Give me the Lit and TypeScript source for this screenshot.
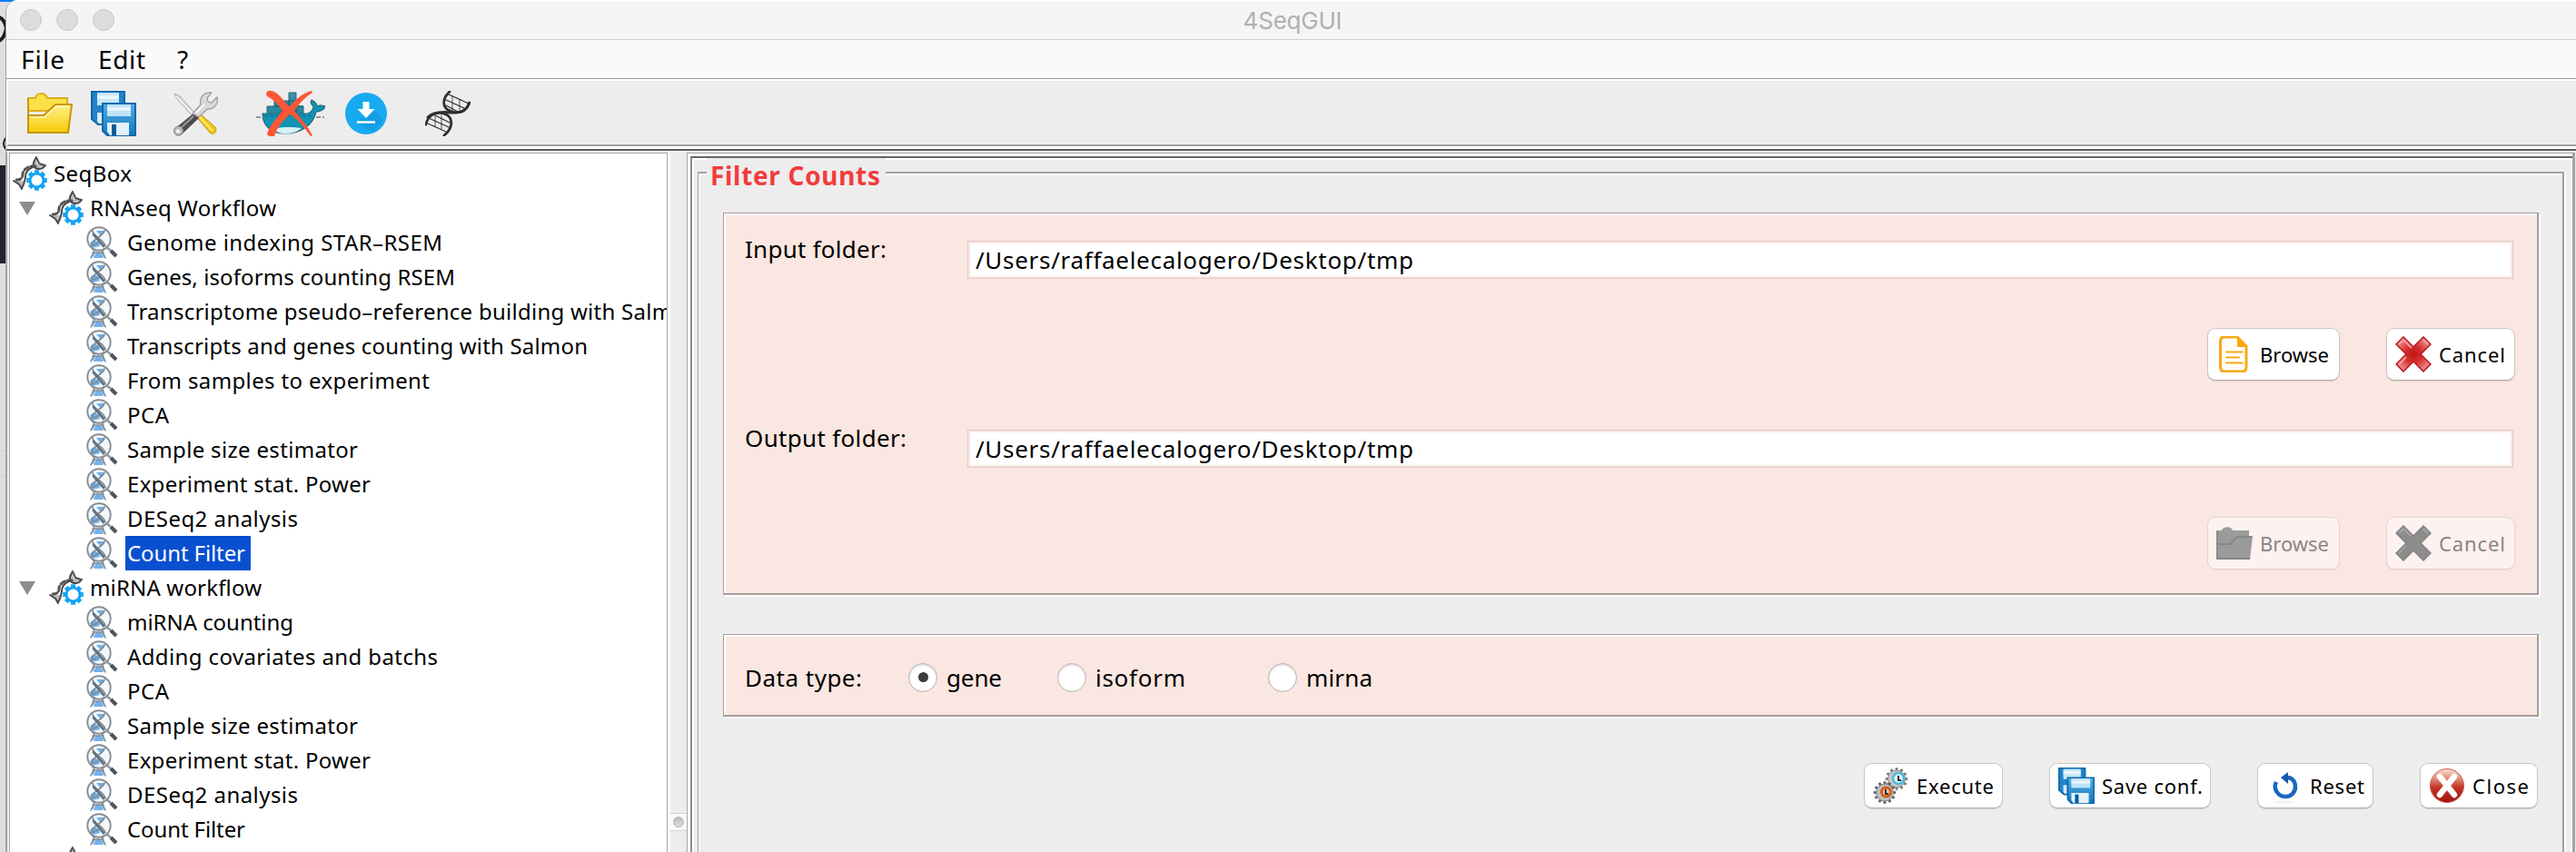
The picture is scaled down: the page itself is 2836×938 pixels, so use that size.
import { LitElement, html, css, svg, nothing } from "lit";
import { customElement, property } from "lit/decorators.js";

/** A single line of text whose tracking is adjusted to fill a given width. */
@customElement("fit-text")
class FitText extends LitElement {
  @property() text = "";
  @property({ type: Number }) w = 0;
  static styles = css`
    :host { display: inline-block; white-space: pre; }
    .t { display: inline-block; }
  `;
  updated() {
    const el = this.renderRoot.querySelector(".t") as HTMLElement;
    el.style.letterSpacing = "0px";
    const n = this.text.length;
    if (this.w && n > 1) {
      const natural = el.getBoundingClientRect().width;
      el.style.letterSpacing = ((this.w - natural) / (n - 1)).toFixed(3) + "px";
    }
  }
  render() {
    return html`<span class="t">${this.text}</span>`;
  }
}

const floppy = svg`
  <g>
    <path d="M1 1h36v36H8l-7-6z" fill="#2384c8" stroke="#0a69ad" stroke-width="2"/>
    <path d="M7 2h24v14H7z" fill="#c5e6f9"/><path d="M7 5h24v4H7z" fill="#e8f6fe"/>
    <path d="M7 24h5v12H9l-2-2z" fill="#d6ecf9"/>
    <path d="M13 14h36v35H18l-5-5z" fill="url(#fl)" stroke="#0a69ad" stroke-width="2"/>
    <path d="M18 15h26v13H18z" fill="#bfe4fa"/><path d="M18 18h26v4H18z" fill="#e6f5fe"/>
    <path d="M18 35h24v14H21l-3-4z" fill="#e2f1fa"/><path d="M23 37h5v12h-5z" fill="#075c9e"/>
  </g>
  <defs><linearGradient id="fl" x1="0" y1="0" x2="0" y2="1"><stop offset="0" stop-color="#55aee2"/><stop offset="1" stop-color="#1378bd"/></linearGradient></defs>`;

const teeth = (cx: number, cy: number, r: number, n: number, w: number, h: number, fill: string) =>
  Array.from({ length: n }, (_, i) => svg`<rect x=${cx - w / 2} y=${cy - r - h / 2} width=${w} height=${h} fill=${fill} transform="rotate(${(i * 360) / n} ${cx} ${cy})"/>`);

const icons: Record<string, { box: string; body: unknown }> = {
  open: {
    box: "0 0 50 50",
    body: svg`
      <defs><linearGradient id="of" x1="0" y1="0" x2="0" y2="1"><stop offset="0" stop-color="#fff08a"/><stop offset="1" stop-color="#f6cc05"/></linearGradient></defs>
      <path d="M1 8h8c1-6 11-7 13 0h22v14H1z" fill="#fbe04a" stroke="#dcae18" stroke-width="2"/>
      <path d="M1 8v38" stroke="#c9950c" stroke-width="2"/>
      <path d="M1 27h17l13-12h18l-4 31H1z" fill="url(#of)" stroke="#c9950c" stroke-width="2"/>
      <path d="M3 29h16l13-12h14" fill="none" stroke="#fff6b8" stroke-width="1.600"/>`,
  },
  floppy: { box: "0 0 50 50", body: floppy },
  tools: {
    box: "0 0 50 50",
    body: svg`
      <path d="M2 3l6 3 17 19-3 3L5 9z" fill="#d8d8d8" stroke="#aaa" stroke-width="1"/>
      <path d="M4 6l18 19" stroke="#f6f6f6" stroke-width="1.600"/>
      <path d="M24 26l5-2 18 16c3 4-2 10-6 6z" fill="#f3c41a" stroke="#c49510" stroke-width="1"/>
      <path d="M28 27l16 17" stroke="#ffe77c" stroke-width="2"/>
      <path d="M23 25l6 5L10 48c-5 4-11-2-7-7z" fill="#4b4b4b"/>
      <path d="M8 42l15-14" stroke="#999" stroke-width="2"/>
      <circle cx="6.500" cy="44" r="5" fill="#bbb" stroke="#888"/><circle cx="6" cy="44.500" r="2" fill="#fff"/>
      <path d="M22 25l9-10c-2-7 3-14 12-13l-5 6 1 4 4 1 6-6c2 8-4 14-11 13l-9 9z" fill="#d9d9d9" stroke="#9b9b9b" stroke-width="1.200"/>
      <path d="M26 24l9-9" stroke="#f8f8f8" stroke-width="2"/>`,
  },
  docker: {
    box: "0 0 76 50",
    body: svg`
      <path d="M36 2h8v9h-8z" fill="#3a8fa5" stroke="#2b6777"/>
      <path d="M20 11h26v6h6v9H12v-9h8z" fill="#26899f" stroke="#2f6473"/>
      <path d="M28 11v15M36 11v15M44 11v15M20 17h32" stroke="#17596b"/>
      <path d="M7 25h50c4-2 6-5 6-8-3-2-3-5-2-7 4 2 6 4 6 7 3-2 6-1 9 0-1 4-6 6-10 6-3 14-16 24-34 24C17 47 7 39 7 25z" fill="#1292b5" stroke="#246a7c" stroke-width="1.200"/>
      <path d="M19 42c9-3 24-2 31-1-7 7-24 9-31 1z" fill="#d9eef2"/>
      <path d="M0 29h9M66 29h9" stroke="#777" stroke-width="1.500" stroke-dasharray="5 2"/>
      <path d="M9 27.500h52" stroke="#0b7896" stroke-dasharray="4 2" stroke-width="1.300"/>
      <path d="M14 0c7-1 13 6 20 15 2 2 3 2 5 0C46 7 53 2 61 0l1 2C54 7 47 14 42 22c8 9 14 16 20 27l-2 1C52 39 45 30 37 26 30 32 23 40 20 50c-3 1-8 0-8-3 4-10 11-18 17-25-5-7-9-12-17-16-2-3 0-6 2-6z" fill="#fd5634"/>`,
  },
  download: {
    box: "0 0 50 50",
    body: svg`
      <circle cx="25" cy="25" r="23" fill="#17aaf0"/>
      <path d="M30 18l14 14-11 13-18-9z" fill="#1298e0" opacity=".7"/>
      <path d="M21.500 12h7v8h6L25 30l-9.500-10h6z" fill="#fff"/><path d="M15 34.500h20" stroke="#fff" stroke-width="2.400"/>`,
  },
  dna: {
    box: "0 0 50 50",
    body: svg`
      <g fill="none" stroke="#2e2e2e" stroke-linecap="round">
        <path d="M27 1C19 8 19 17 25 21c8 5 20 4 23-7" stroke-width="2.800"/>
        <path d="M49 13c-3 9-11 12-21 11C15 22 3 25 1 37" stroke-width="2.800"/>
        <path d="M3 29c7-6 16-6 22-2 6 5 5 15-4 22" stroke-width="2.800"/>
        <path d="M26 4l22 10M23 10l22 10M23 16l13 7" stroke-width="1.200"/>
        <path d="M30 6v16M38 10v13" stroke-width=".8"/>
        <path d="M4 30l22 10M3 36l20 9M11 27l16 8" stroke-width="1.200"/>
        <path d="M11 28v11M18 27v15" stroke-width=".8"/>
      </g>`,
  },
  workflow: {
    box: "0 0 38 38",
    body: svg`
      <path d="M26 2l1 7 9 1-7 4-7-4z" fill="#bbb"/><path d="M2 27h10l-1 8z" fill="#bbb"/>
      <g fill="none" stroke="#4a4a4a" stroke-linecap="round">
        <path d="M26 1c-3 5-5 9-1 12 4 2 8 1 11-3M27 3l2 5 6 2" stroke-width="2"/>
        <path d="M25 11c-7-1-13 3-14 8 0 4 0 7-9 7" stroke-width="3" stroke="#555" stroke-dasharray="5 3"/>
        <path d="M22 12c-5 2-8 6-8 11-1 6-2 9-4 12M1 27l6 4 3 5" stroke-width="2"/>
      </g>
      <circle cx="26.500" cy="26.500" r="11.500" fill="#fff"/>
      ${teeth(26.5, 26.5, 9.5, 8, 5, 3.5, "#15a3f5")}
      <circle cx="26.500" cy="26.500" r="7.500" fill="#fff" stroke="#15a3f5" stroke-width="3"/>`,
  },
  lens: {
    box: "0 0 36 36",
    body: svg`
      <circle cx="14" cy="14" r="12.500" fill="#f4f8fb"/>
      <path d="M11 5h9l-4 6zM4 19c3-5 7-3 10-1l1 4-8 2z" fill="#6fb0ec"/>
      <path d="M6 30h14l1 4H5z" fill="#b9cfe2"/>
      <path d="M8 35l3-6h5l3 6" fill="#74b2ec"/>
      <g fill="none" stroke="#7d8993" stroke-linecap="round">
        <path d="M7 5c0 7 13 9 14 17M20 5c-1 6-12 8-14 15M5 22l8-3" stroke-width="1.600"/>
        <path d="M7 25c4 3 0 6-2 10M19 25c-3 3 0 6 2 10M7 29h12" stroke-width="1.600"/>
        <path d="M8 9l11 13" stroke-width="2.800" stroke="#65717c"/>
      </g>
      <circle cx="14" cy="14" r="12.700" fill="none" stroke="#858c93" stroke-width="1.900"/>
      <path d="M22 23l5 4" stroke="#8d959c" stroke-width="2.400"/><path d="M27 27l6 6" stroke="#4a5560" stroke-width="4"/>`,
  },
  file: {
    box: "0 0 40 40",
    body: svg`
      <path d="M9 1h14l10 10v23q0 5-5 5H9q-4.500 0-4.500-5V6Q4.500 1 9 1z" fill="#fffdf7" stroke="#f9a91a" stroke-width="3"/>
      <path d="M23 0l11 12H24q-1 0-1-1z" fill="#fca50b"/>
      <path d="M11 17.500h18M11 23.500h14M11 29.500h18" stroke="#f9a91a" stroke-width="2" stroke-linecap="round"/>`,
  },
  cross: {
    box: "0 0 40 40",
    body: svg`
      <defs><radialGradient id="cr"><stop offset="0" stop-color="#c21414"/><stop offset=".5" stop-color="#d63030"/><stop offset="1" stop-color="#e98080"/></radialGradient></defs>
      <path d="M9 1l11 11L31 1l8 8-11 11 11 11-8 8-11-11L9 39l-8-8 11-11L1 9z" fill="url(#cr)" stroke="#b81616" stroke-width="1.500"/>
      <path d="M4 9l5-5 9 9M31 4l5 5M4 31l8-8" fill="none" stroke="#f5a3a3" stroke-width="2"/>`,
  },
  folderOff: {
    box: "0 0 40 40",
    body: svg`
      <path d="M0 6h6c1-5 11-5 12 0h18v6h4l-3 26H0z" fill="#9b9b9b"/>
      <path d="M0 21h15l8-8h16M1 37h36" fill="none" stroke="#868686" stroke-width="2"/><path d="M1 7v31" stroke="#8a8a8a" stroke-width="2"/>`,
  },
  crossOff: {
    box: "0 0 40 40",
    body: svg`
      <path d="M9 1l11 11L31 1l8 8-11 11 11 11-8 8-11-11L9 39l-8-8 11-11L1 9z" fill="#8c8c8c" stroke="#838383" stroke-width="1.500"/>
      <path d="M4 9l5-5 9 9M31 4l5 5M4 31l8-8" fill="none" stroke="#a4a4a4" stroke-width="2"/>`,
  },
  gears: {
    box: "0 0 40 40",
    body: svg`
      ${teeth(26, 12.5, 10, 12, 2.8, 4.5, "#777")}
      <circle cx="26" cy="12.500" r="9.500" fill="#c9c9c9" stroke="#8d8d8d"/>
      <circle cx="28" cy="12" r="6" fill="#e9f8fd" stroke="#50b8dc" stroke-width="2.600"/><path d="M28 9v5h3" stroke="#2b2b2b" stroke-width="2" fill="none"/>
      ${teeth(13, 27.5, 10, 12, 2.8, 4.5, "#5d5d5d")}
      <circle cx="13" cy="27.500" r="9.500" fill="#bdbdbd" stroke="#858585"/>
      <circle cx="14.500" cy="27" r="5" fill="#e5c9b5" stroke="#d65b17" stroke-width="3"/><path d="M14 24v5h3" stroke="#333" stroke-width="2" fill="none"/>`,
  },
  reset: {
    box: "0 0 40 40",
    body: svg`
      <ellipse cx="20" cy="38" rx="10" ry="1.500" fill="#f1f1f1"/>
      <path d="M11 16c-4 7 2 16 10 16 7 0 11-5 11-11s-4-10-9-10" fill="none" stroke="#1c67bd" stroke-width="4.500"/>
      <path d="M24 5v13l-8-7z" fill="#1559ad"/>`,
  },
  close: {
    box: "0 0 40 40",
    body: svg`
      <defs><linearGradient id="cl" x1="0" y1="0" x2="0" y2="1"><stop offset="0" stop-color="#fbe0d6"/><stop offset=".3" stop-color="#e08a78"/><stop offset=".55" stop-color="#c23427"/><stop offset="1" stop-color="#a3150f"/></linearGradient></defs>
      <circle cx="20" cy="20" r="18.500" fill="url(#cl)" stroke="#c9604f" stroke-width="1"/>
      <path d="M12 10l16 20M28 10L12 30" stroke="#fff" stroke-width="6.500" stroke-linecap="round"/>`,
  },
};

const icon = (name: string, cls: string) =>
  html`<svg class=${cls} viewBox=${icons[name].box}>${icons[name].body}</svg>`;

type Row = { label: string; w: number; level: 0 | 1 | 2; selected?: boolean };
const tree: Row[] = [
  { label: "SeqBox", w: 86, level: 0 },
  { label: "RNAseq Workflow", w: 205, level: 1 },
  { label: "Genome indexing STAR–RSEM", w: 347, level: 2 },
  { label: "Genes, isoforms counting RSEM", w: 361, level: 2 },
  { label: "Transcriptome pseudo–reference building with Salmon", w: 630, level: 2 },
  { label: "Transcripts and genes counting with Salmon", w: 507, level: 2 },
  { label: "From samples to experiment", w: 333, level: 2 },
  { label: "PCA", w: 46, level: 2 },
  { label: "Sample size estimator", w: 254, level: 2 },
  { label: "Experiment stat. Power", w: 268, level: 2 },
  { label: "DESeq2 analysis", w: 188, level: 2 },
  { label: "Count Filter", w: 130, level: 2, selected: true },
  { label: "miRNA workflow", w: 189, level: 1 },
  { label: "miRNA counting", w: 183, level: 2 },
  { label: "Adding covariates and batchs", w: 342, level: 2 },
  { label: "PCA", w: 46, level: 2 },
  { label: "Sample size estimator", w: 254, level: 2 },
  { label: "Experiment stat. Power", w: 268, level: 2 },
  { label: "DESeq2 analysis", w: 188, level: 2 },
  { label: "Count Filter", w: 130, level: 2 },
  { label: "", w: 0, level: 1 },
];

@customElement("app-root")
class AppRoot extends LitElement {
  static styles = css`
    :host { display: block; width: 2836px; height: 938px; overflow: hidden; color: #000; font: 26px "Noto Sans", sans-serif; }
    * { box-sizing: border-box; }
    svg { display: block; flex: none; }
    .desktop { display: flex; height: 938px; background: linear-gradient(#0b7bf3 0 2px, #dedee0 2px); }
    .strip { width: 6px; height: 938px; }
    .window { flex: 1; min-width: 0; display: flex; flex-direction: column; background: #ededed; border-radius: 14px 0 0 0; overflow: hidden; border-left: 1px solid #a2a2a2; }
    .titlebar { height: 44px; flex: none; display: grid; grid-template-columns: 1fr auto 1fr; background: #f5f5f5; border-bottom: 1px solid #cfcfcf; border-top: 1px solid #fff; }
    .lights { display: flex; gap: 16px; padding: 9px 0 0 15px; }
    .light { width: 24px; height: 24px; border-radius: 50%; background: #dcdcdc; border: 1px solid #c8c8c8; }
    .title { font: 26px/44px Inter, sans-serif; color: #b0b0b0; padding-left: 3px; }
    .menubar { height: 43px; flex: none; display: flex; background: #fafafa; border-bottom: 1px solid #999; font-size: 28px; line-height: 42px; padding-left: 16px; }
    .m1 { width: 85px; } .m2 { width: 87px; }
    .toolbar { height: 74px; flex: none; display: flex; border-bottom: 2px solid #a0a0a0; border-top: 2px solid #fff; border-left: 2px solid #fff; padding: 11px 0 0 21px; background: #ededed; }
    .tool { width: 50px; height: 50px; }
    .save { margin-left: 20px; } .prefs { margin-left: 40px; } .whale { width: 76px; margin-left: 42px; }
    .dl { margin-left: 20px; } .helix { margin-left: 40px; }
    .rule { height: 7px; flex: none; background: linear-gradient(#fff 0 3px, #5c5c5c 3px 5px, #ededed 5px); }
    .body { flex: 1; min-height: 0; display: flex; border-left: 1px solid #a2a2a2; padding-left: 2px; }
    .tree { width: 725px; flex: none; background: #fff; border: 1px solid #a8a8a8; border-bottom: 0; overflow: hidden; padding-top: 3px; font-size: 24px; }
    .row { display: flex; height: 38px; line-height: 38px; align-items: center; white-space: nowrap; }
    .l0 { padding-left: 3px; } .l1 { padding-left: 10px; } .l2 { padding-left: 84px; }
    .arrow { width: 18px; height: 15px; margin-right: 15px; }
    .flow { width: 38px; height: 38px; margin-right: 5px; }
    .lens { width: 36px; height: 36px; margin-right: 7px; }
    .label { height: 38px; padding: 0 2px; width: max-content; }
    .on { background: #0850d0; color: #fff; width: 138px; }
    .divider { width: 21px; flex: none; border-left: 3px solid #fff; display: flex; flex-direction: column; padding-top: 727px; }
    .knob { height: 20px; background: #fafafa; border: solid #d4d4d4; border-width: 1px 0; display: flex; align-items: center; justify-content: center; }
    .knob i { width: 12px; height: 12px; border-radius: 50%; background: linear-gradient(#bbb, #ddd); border: 1px solid #b5b5b5; }
    .pane { flex: 1; min-width: 0; display: flex; border: 1px solid #a4a4a4; border-width: 1px 3px 0 1px; margin-right: 1px; background: #fff; padding: 3px 0 0 3px; }
    .inner { flex: 1; min-width: 0; display: flex; border: solid #666; border-width: 2px 0 0 2px; border-left-color: #8c8c8c; box-shadow: inset 2px 2px 0 #fff, inset -2px 0 0 #fff; padding: 15px 9px 0 6px; background: #ededed; }
    .group { flex: 1; min-width: 0; position: relative; border: solid #a0a0a0; border-width: 2px 2px 0 1px; box-shadow: inset 2px 2px 0 #fff, 2px 0 0 #fff; padding: 43px 26px 0 27px; }
    .legend { position: absolute; left: 9px; top: -17px; height: 38px; line-height: 38px; padding-left: 4px; width: 197px; background: #ededed; color: #f23c3c; font-weight: 700; font-size: 28px; }
    .panel { background: #fae7e1; border: solid #a79c9a; border-width: 1px 2px 2px 1px; box-shadow: inset 2px 2px 0 #fff, 2px 2px 0 #fff; }
    .folders { height: 421px; padding: 30px 26px 0 23px; }
    .line { display: flex; height: 42px; }
    .caption { width: 245px; flex: none; line-height: 18px; }
    .field { flex: 1; height: 42px; border: 1px solid #dfcac5; background: #fff; box-shadow: inset 0 0 0 2px #fae7e1; line-height: 40px; padding-left: 8px; }
    .actions { display: flex; justify-content: flex-end; gap: 51px; margin: 54px -2px 54px 0; }
    .btn { display: flex; align-items: center; height: 58px; border-radius: 9px; background: #fff; border: 1px solid #cfc3c0; border-bottom-color: #b5aaa8; box-shadow: 0 1px 1px rgba(0,0,0,.12); padding-left: 9px; gap: 8px; font: 22px "Noto Sans", sans-serif; color: #000; text-align: left; white-space: nowrap; }
    .off { background: #fdf2ef; color: #8b8583; border-color: #e6d3ce; box-shadow: 0 1px 1px rgba(0,0,0,.06); }
    .b1 { width: 146px; } .b2 { width: 142px; } .b3 { width: 153px; } .b4 { width: 178px; } .b5 { width: 128px; } .b6 { width: 130px; }
    .ico { width: 40px; height: 40px; }
    .types { height: 91px; margin-top: 43px; display: flex; align-items: center; padding: 5px 0 0 23px; }
    .tcap { width: 180px; }
    .radio { width: 32px; height: 32px; border-radius: 50%; background: #fff; border: 1px solid #bbb1ae; box-shadow: inset 0 2px 2px #e2e2e2; display: grid; place-items: center; margin-right: 10px; }
    .dot { width: 11px; height: 11px; border-radius: 50%; background: #3c3c3c; }
    .o1 { width: 122px; } .o2 { width: 190px; }
    .bottom { display: flex; justify-content: flex-end; gap: 51px; margin: 51px 1px 0 0; }
    .bottom .btn { height: 50px; border-color: #c8c8c8; border-bottom-color: #adadad; }
  `;

  private button(cls: string, ic: string, text: string, w: number, off = false) {
    return html`<button class="btn ${cls} ${off ? "off" : ""}" ?disabled=${off}>${icon(ic, "ico")}<fit-text .text=${text} .w=${w}></fit-text></button>`;
  }

  private folder(label: string, w: number, ic1: string, ic2: string, off: boolean) {
    return html`
      <div class="line">
        <div class="caption"><fit-text .text=${label} .w=${w}></fit-text></div>
        <div class="field"><fit-text .text=${"/Users/raffaelecalogero/Desktop/tmp"} .w=${482}></fit-text></div>
      </div>
      <div class="actions">${this.button("b1", ic1, "Browse", 76, off)}${this.button("b2", ic2, "Cancel", 73, off)}</div>`;
  }

  private row(r: Row) {
    return html`<div class="row l${r.level}">
      ${r.level === 1 ? html`<svg class="arrow" viewBox="0 0 18 15">${r.label ? svg`<path d="M0 0h18L9 15z" fill="#8c8c8c"/>` : nothing}</svg>` : nothing}
      ${r.level === 2 ? icon("lens", "lens") : icon("workflow", "flow")}
      <div class="label ${r.selected ? "on" : ""}"><fit-text .text=${r.label} .w=${r.w}></fit-text></div>
    </div>`;
  }

  render() {
    return html`<div class="desktop">
      <svg class="strip" viewBox="0 0 6 938">
        <path d="M0 182h6v108H0z" fill="#20242c"/>
        <path d="M-1 19q6 2 8 12-2 11-8 14" fill="none" stroke="#1b1b1b" stroke-width="4"/>
        <path d="M7 151q-6 7 0 14" fill="none" stroke="#1b1b1b" stroke-width="2"/>
        <path d="M0 496h6M0 524h6" stroke="#cfcfd2"/>
      </svg>
      <div class="window">
        <div class="titlebar">
          <div class="lights"><div class="light"></div><div class="light"></div><div class="light"></div></div>
          <div class="title"><fit-text .text=${"4SeqGUI"} .w=${109}></fit-text></div>
        </div>
        <div class="menubar">
          <div class="m1"><fit-text .text=${"File"} .w=${48}></fit-text></div>
          <div class="m2"><fit-text .text=${"Edit"} .w=${52}></fit-text></div>
          <div>?</div>
        </div>
        <div class="toolbar">
          ${icon("open", "tool")}${icon("floppy", "tool save")}${icon("tools", "tool prefs")}
          ${icon("docker", "tool whale")}${icon("download", "tool dl")}${icon("dna", "tool helix")}
        </div>
        <div class="rule"></div>
        <div class="body">
          <div class="tree">${tree.map((r) => this.row(r))}</div>
          <div class="divider"><div class="knob"><i></i></div></div>
          <div class="pane"><div class="inner"><div class="group">
            <div class="legend"><fit-text .text=${"Filter Counts"} .w=${187}></fit-text></div>
            <div class="panel folders">
              ${this.folder("Input folder:", 156, "file", "cross", false)}
              ${this.folder("Output folder:", 178, "folderOff", "crossOff", true)}
            </div>
            <div class="panel types">
              <div class="tcap"><fit-text .text=${"Data type:"} .w=${129}></fit-text></div>
              <div class="radio"><div class="dot"></div></div><div class="o1"><fit-text .text=${"gene"} .w=${61}></fit-text></div>
              <div class="radio"></div><div class="o2"><fit-text .text=${"isoform"} .w=${99}></fit-text></div>
              <div class="radio"></div><div><fit-text .text=${"mirna"} .w=${73}></fit-text></div>
            </div>
            <div class="bottom">
              ${this.button("b3", "gears", "Execute", 85)}${this.button("b4", "floppy", "Save conf.", 111)}${this.button("b5", "reset", "Reset", 60)}${this.button("b6", "close", "Close", 62)}
            </div>
          </div></div></div>
        </div>
      </div>
    </div>`;
  }
}
